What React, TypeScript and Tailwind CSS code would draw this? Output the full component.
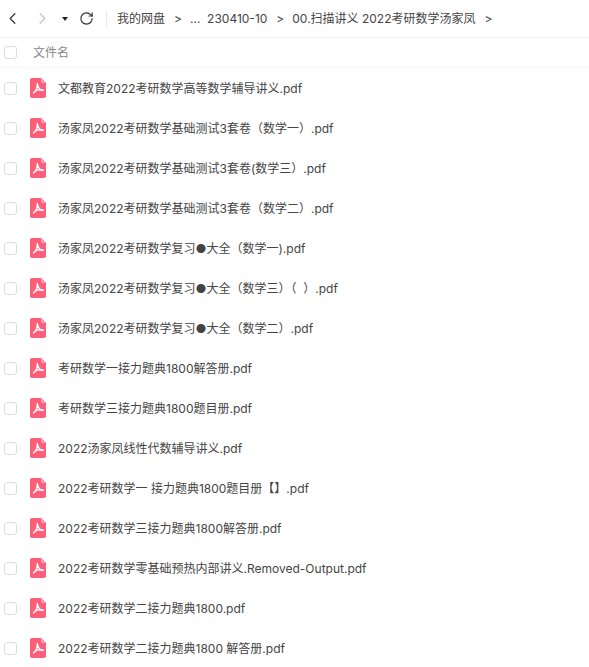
import { ChevronLeft, ChevronRight, RotateCw } from "lucide-react";

const crumbs = ["我的网盘", "...  230410-10", "00.扫描讲义 2022考研数学汤家凤"];

const files = [
  "文都教育2022考研数学高等数学辅导讲义.pdf",
  "汤家凤2022考研数学基础测试3套卷（数学一）.pdf",
  "汤家凤2022考研数学基础测试3套卷(数学三）.pdf",
  "汤家凤2022考研数学基础测试3套卷（数学二）.pdf",
  "汤家凤2022考研数学复习●大全（数学一).pdf",
  "汤家凤2022考研数学复习●大全（数学三）（  ）.pdf",
  "汤家凤2022考研数学复习●大全（数学二）.pdf",
  "考研数学一接力题典1800解答册.pdf",
  "考研数学三接力题典1800题目册.pdf",
  "2022汤家凤线性代数辅导讲义.pdf",
  "2022考研数学一 接力题典1800题目册【】.pdf",
  "2022考研数学三接力题典1800解答册.pdf",
  "2022考研数学零基础预热内部讲义.Removed-Output.pdf",
  "2022考研数学二接力题典1800.pdf",
  "2022考研数学二接力题典1800 解答册.pdf",
];

function PdfIcon() {
  return (
    <svg width="16" height="20" viewBox="0 0 16 20" className="block shrink-0">
      <path d="M2 0h9l5 5v13a2 2 0 0 1-2 2H2a2 2 0 0 1-2-2V2a2 2 0 0 1 2-2z" fill="#fb6078" />
      <path d="M11 0l5 5h-4a1 1 0 0 1-1-1z" fill="#fd9aa9" />
      <path
        d="M7.2 5.500c.5 2.500 1.500 4.800 3.200 6.200 1 .8 2.400.9 3 .5-1.600-.7-4-.6-6.200 0-1.600.5-3 1.400-3.600 2.800.9-.4 2-2 3-4.200.5-1.300.9-3 .6-5.300z"
        fill="none"
        stroke="#fff"
        strokeWidth="1.300"
        strokeLinejoin="round"
      />
    </svg>
  );
}

function Checkbox() {
  return <span className="block w-[13px] h-[13px] shrink-0 rounded-[3px] border border-[#dcdcdc] bg-white" />;
}

export default function App() {
  return (
    <div className="w-[589px] h-[667px] overflow-hidden bg-white text-[#444] text-[12px] font-['Inter','Noto_Sans_CJK_SC',sans-serif]">
      <header className="h-[38px] flex items-center border-b border-[#f2f2f2]">
        <ChevronLeft className="ml-[3px] w-[19px] h-[19px] text-[#333]" strokeWidth={1.500} />
        <ChevronRight className="ml-[11px] w-[19px] h-[19px] text-[#c4c4c4]" strokeWidth={1.500} />
        <span className="ml-[10px] w-0 h-0 border-x-[3px] border-x-transparent border-t-[4px] border-t-[#222]" />
        <RotateCw className="ml-[11px] w-[15px] h-[15px] text-[#333]" strokeWidth={1.800} />
        <span className="ml-[12px] w-px h-[16px] bg-[#e8e8e8]" />
        <nav className="ml-[10px] flex items-center text-[#444]">
          {crumbs.map((crumb) => (
            <span key={crumb} className="flex items-center whitespace-pre">
              {crumb}
              <span className="ml-[9px] mr-[8px]">&gt;</span>
            </span>
          ))}
        </nav>
      </header>
      <div className="h-[30px] flex items-center pl-[4px] border-b border-[#f7f7f7]">
        <Checkbox />
        <span className="ml-[16px] text-[#888]">文件名</span>
      </div>
      <ul>
        {files.map((name) => (
          <li key={name} className="h-[40px] flex items-center pl-[4px]">
            <Checkbox />
            <span className="ml-[13px]"><PdfIcon /></span>
            <span className="ml-[12px] pt-[1px] whitespace-pre">{name}</span>
          </li>
        ))}
      </ul>
    </div>
  );
}
